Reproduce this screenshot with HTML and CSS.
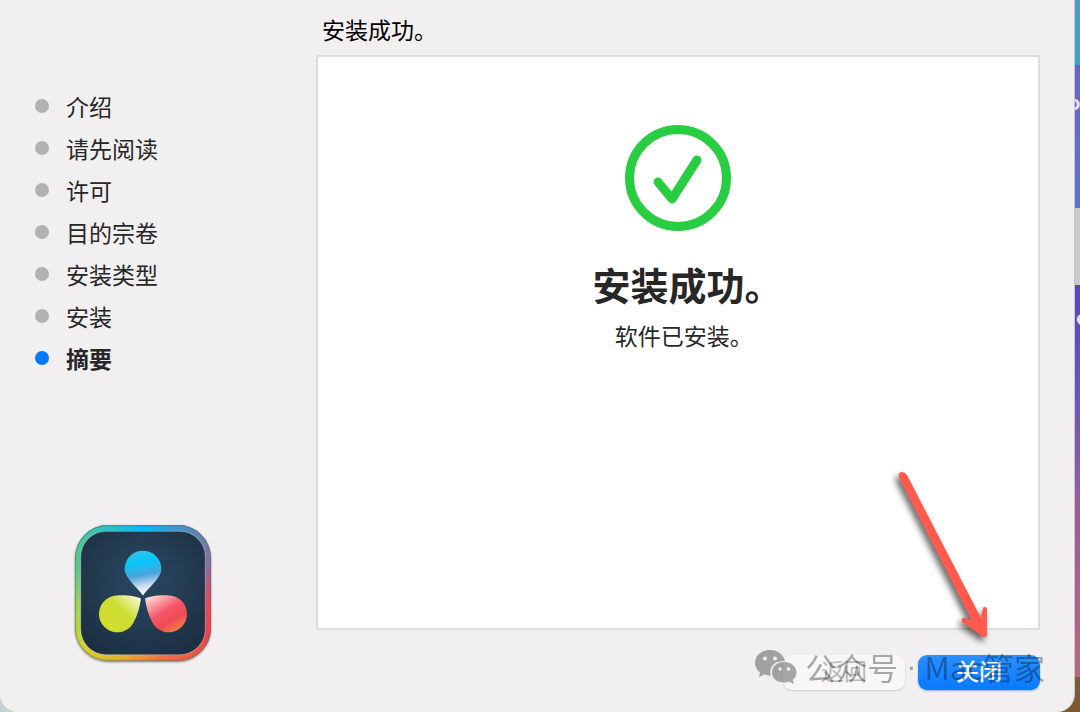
FILE: index.html
```
<!DOCTYPE html>
<html lang="zh-CN">

<head>
  <meta charset="utf-8">
  <meta name="viewport" content="width=device-width, initial-scale=1">
  <title>安装</title>
  <link rel="stylesheet" href="styles.css">
</head>

<body>
  <div class="installer">
    <aside class="sidebar">
      <ol class="steps">
        <li>介绍</li>
        <li>请先阅读</li>
        <li>许可</li>
        <li>目的宗卷</li>
        <li>安装类型</li>
        <li>安装</li>
        <li class="current" aria-current="step">摘要</li>
      </ol>
      <svg class="app-logo" viewBox="0 0 144 144" aria-hidden="true">
        <defs>
          <radialGradient id="tileFill" cx=".5" cy=".4" r=".7">
            <stop offset="0" stop-color="#294862"/>
            <stop offset=".5" stop-color="#233c52"/>
            <stop offset="1" stop-color="#1c2d40"/>
          </radialGradient>
          <linearGradient id="blueDrop" x1=".4" y1="0" x2=".55" y2="1">
            <stop offset="0" stop-color="#35c3e6"/>
            <stop offset=".25" stop-color="#06c6fb"/>
            <stop offset=".55" stop-color="#4aa5dc"/>
            <stop offset=".8" stop-color="#d3e0f3"/>
            <stop offset="1" stop-color="#ffffff"/>
          </linearGradient>
          <linearGradient id="yellowDrop" x1=".2" y1=".8" x2="1" y2=".05">
            <stop offset="0" stop-color="#d2dc2c"/>
            <stop offset=".5" stop-color="#cddd35"/>
            <stop offset="1" stop-color="#fdfbe6"/>
          </linearGradient>
          <linearGradient id="redDrop" x1="0" y1="0" x2=".7" y2="1">
            <stop offset="0" stop-color="#fff5ee"/>
            <stop offset=".5" stop-color="#f4586a"/>
            <stop offset=".75" stop-color="#f04a55"/>
            <stop offset="1" stop-color="#ee8044"/>
          </linearGradient>
          <clipPath id="tileShape"><rect x="5" y="5" width="133" height="133" rx="32"/></clipPath>
          <filter id="logoShadow" x="-10%" y="-10%" width="120%" height="120%">
            <feDropShadow dx="0" dy="1" stdDeviation="1" flood-opacity=".5"/>
          </filter>
        </defs>
        <rect x="5" y="5" width="133" height="133" rx="32" fill="#777" filter="url(#logoShadow)"/>
        <foreignObject x="0" y="0" width="144" height="144" clip-path="url(#tileShape)">
          <div class="logo-rim"></div>
        </foreignObject>
        <rect x="5.5" y="5.5" width="132" height="132" rx="31.5" fill="none" stroke="#566" stroke-opacity=".45"/>
        <rect x="10.500" y="11" width="122" height="121" rx="25" fill="url(#tileFill)" stroke="#e8efee" stroke-opacity=".35"/>
        <path d="M71.500 74C67 67 53.500 57 53.500 48A18 18 0 0 1 89.500 48C89.500 57 76 67 71.500 74Z" fill="url(#blueDrop)"/>
        <path d="M69.500 77C66 75 54 73 46 74A18 18 0 1 0 62 101C66 94 68.500 85 69.500 77Z" fill="url(#yellowDrop)"/>
        <path d="M73.500 77C77 75 89 73 97 74A18 18 0 1 1 81 101C77 94 74.500 85 73.500 77Z" fill="url(#redDrop)"/>
      </svg>
    </aside>

    <main class="main">
      <h1 class="title">安装成功。</h1>
      <section class="panel">
        <svg class="success-icon" viewBox="0 0 106 106" aria-hidden="true">
          <circle cx="53" cy="53" r="48.500"/>
          <path d="M33 57L47 74L72 35"/>
        </svg>
        <h2>安装成功。</h2>
        <p>软件已安装。</p>
      </section>
      <footer class="actions">
        <button type="button" disabled>返回</button>
        <button type="button" class="primary">关闭</button>
        <div class="watermark">
          <svg viewBox="0 0 42 34" aria-hidden="true">
            <path fill-rule="evenodd" d="M15 0C6.500 0 0 5.500 0 13C0 17 2 20 5 22.500L4 27L9.500 24.500C12 25.300 14 25.500 16 25.500C13 16 21 10.500 30 11C28.500 4.500 22.500 0 15 0ZM10 6.500A2 2 0 1 1 10 10.500A2 2 0 1 1 10 6.500ZM20 6.500A2 2 0 1 1 20 10.500A2 2 0 1 1 20 6.500Z"/>
            <path fill-rule="evenodd" d="M29 12C22 12 17 16.500 17 22.500C17 28.500 22 32.500 29 32.500C31 32.500 32.500 32 34 31.700L39 34L37.800 30C40 28 41.500 25.500 41.500 22.500C41.500 16.500 36 12 29 12ZM25 17.300A1.700 1.700 0 1 1 25 20.700A1.700 1.700 0 1 1 25 17.300ZM33.500 17.300A1.700 1.700 0 1 1 33.500 20.700A1.700 1.700 0 1 1 33.500 17.300Z"/>
          </svg>
          <span>公众号</span><span class="dot">·</span><span>Mac管家</span>
        </div>
        <!-- points at the close button -->
        <svg class="arrow" viewBox="0 0 110 190" aria-hidden="true">
          <path d="M19.500 18.500Q17 12.500 22 12Q25 12 27 15L101 158L103 148Q105 145 107 149L107 175Q106 179 102 176L82 162Q80 157 86 158L92 161Z"/>
        </svg>
      </footer>
    </main>
  </div>

  <div class="desktop" aria-hidden="true">
    <div class="tile sky"></div>
    <div class="tile blue"><span>o</span></div>
    <div class="tile grey"></div>
    <div class="tile sunset"><span>o</span></div>
    <div class="tile brown"></div>
  </div>
</body>

</html>
```
FILE: styles.css
```
/* ---------- page ---------- */
* {
  box-sizing: border-box;
}

body {
  display: flex;
  min-height: 100vh;
  margin: 0;
  overflow: hidden;
  background: linear-gradient(90deg, #c3d0d4 50%, #7d5a34 50%);
  color: #272727;
  font-family: "Noto Sans CJK SC", sans-serif;
  font-size: 23px;
  line-height: 34px;
}

h1, h2, p, ol {
  margin: 0;
  padding: 0;
}

/* ---------- installer window ---------- */
.installer {
  display: flex;
  flex: 1;
  min-width: 0;
  background: #f1eff0;
  border-right: 1px solid #c9c8c9;
  border-radius: 0 0 18px 18px;
}

.sidebar {
  display: flex;
  flex-direction: column;
  justify-content: space-between;
  flex: 0 0 316px;
  padding: 85px 35px 45px;
}

.steps {
  list-style: none;
}

.steps li {
  display: flex;
  align-items: center;
  gap: 17px;
  line-height: 42px;
}

.steps li::before {
  content: "";
  width: 14px;
  height: 14px;
  border-radius: 50%;
  background: #b3b1b2;
}

.steps .current {
  font-weight: bold;
}

.steps .current::before {
  background: #007aff;
}

.app-logo {
  width: 147px;
  height: 147px;
  margin-left: 35px;
}

.logo-rim {
  height: 100%;
  background: conic-gradient(#08b4ff, #5c86b8 40deg, #7a77a6 60deg, #f04459 100deg, #f2404a 125deg, #ed7440 165deg, #e6a834 195deg, #d0d42c 230deg, #a3d84c 255deg, #5bcb86 290deg, #3bc5ae 320deg, #08b4ff);
}

.main {
  display: flex;
  flex-direction: column;
  flex: 1;
  padding: 12px 34px 22px 0;
}

.title {
  padding-left: 6px;
  color: #000;
  font-size: 23px;
  font-weight: normal;
}

.panel {
  display: flex;
  flex-direction: column;
  align-items: center;
  flex: 1;
  margin-top: 9px;
  padding-top: 68px;
  background: #fff;
  border: 2px solid #dfdddE;
  /* half-width full stop keeps the lines centred */
  font-feature-settings: "halt";
}

.success-icon {
  width: 106px;
  height: 106px;
  fill: none;
  stroke: #28cd41;
  stroke-width: 9;
  stroke-linecap: round;
  stroke-linejoin: round;
}

.panel h2 {
  margin-top: 25px;
  font-size: 38px;
  line-height: 56px;
}

.panel p {
  margin-top: 6px;
}

/* ---------- buttons ---------- */
.actions {
  position: relative;
  display: flex;
  justify-content: flex-end;
  gap: 13px;
  margin-top: 25px;
}

button {
  width: 122px;
  height: 35px;
  padding: 0 0 5px;
  border: 0;
  border-radius: 9px;
  background: #f8f6f7;
  box-shadow: 0 1px 2px rgba(0, 0, 0, .15);
  color: #bbb9ba;
  font: inherit;
  line-height: 30px;
}

button.primary {
  background: linear-gradient(#2b8fff, #077aff);
  box-shadow: 0 1px 2px rgba(0, 90, 220, .4);
  color: #fff;
  font-weight: 500;
}

/* ---------- overlays ---------- */
.watermark {
  position: absolute;
  right: -5px;
  top: -9px;
  display: flex;
  align-items: center;
  gap: 8px;
  color: #000;
  font-size: 31px;
  line-height: 42px;
  white-space: nowrap;
  opacity: .32;
  pointer-events: none;
}

.watermark svg {
  width: 42px;
  height: 34px;
}

.watermark .dot {
  font-family: "Liberation Sans", sans-serif;
}

.arrow {
  position: absolute;
  right: 50px;
  bottom: 40px;
  width: 110px;
  height: 190px;
  fill: #ff5a4d;
  filter: drop-shadow(-3px 4px 3px rgba(0, 0, 0, .6));
  pointer-events: none;
}

/* ---------- desktop behind the window ---------- */
.desktop {
  display: flex;
  flex-direction: column;
  flex: 0 0 5px;
  overflow: hidden;
}

.tile {
  display: flex;
  flex: 1 1 0;
  min-height: 0;
  color: #e4e2ee;
  font-size: 20px;
  font-weight: bold;
  line-height: 24px;
}

.tile span {
  margin: 25px 0 0 -7px;
}

.sky {
  flex-grow: 65;
  background: linear-gradient(#4b9dcc, #35a5cd);
}

.blue {
  flex-grow: 143;
  background: linear-gradient(#6864c8, #5874d2);
}

.grey {
  flex-grow: 77;
  background: #cbcbcb;
}

.sunset {
  flex-grow: 392;
  background: linear-gradient(#5147c4, #6656c4 25%, #9a5aa0 55%, #c0647e);
}

.sunset span {
  margin: 20px 0 0 1px;
}

.brown {
  flex-grow: 35;
  background: #7d5a34;
}
```
